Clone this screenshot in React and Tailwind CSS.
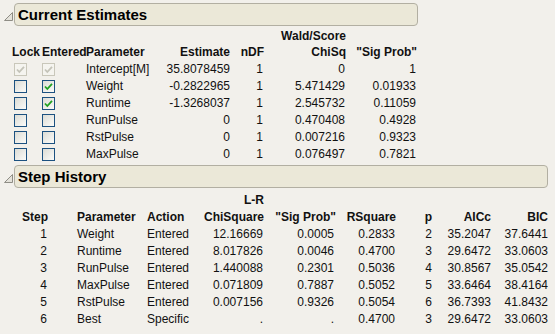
import React from 'react';

const estimates = [
    { name: 'Intercept[M]', est: '35.8078459', ndf: '1', chi: '0', prob: '1', lock: true, entered: true, disabled: true },
    { name: 'Weight', est: '-0.2822965', ndf: '1', chi: '5.471429', prob: '0.01933', lock: false, entered: true },
    { name: 'Runtime', est: '-1.3268037', ndf: '1', chi: '2.545732', prob: '0.11059', lock: false, entered: true },
    { name: 'RunPulse', est: '0', ndf: '1', chi: '0.470408', prob: '0.4928', lock: false, entered: false },
    { name: 'RstPulse', est: '0', ndf: '1', chi: '0.007216', prob: '0.9323', lock: false, entered: false },
    { name: 'MaxPulse', est: '0', ndf: '1', chi: '0.076497', prob: '0.7821', lock: false, entered: false },
];

const steps = [
    ['1', 'Weight', 'Entered', '12.16669', '0.0005', '0.2833', '2', '35.2047', '37.6441'],
    ['2', 'Runtime', 'Entered', '8.017826', '0.0046', '0.4700', '3', '29.6472', '33.0603'],
    ['3', 'RunPulse', 'Entered', '1.440088', '0.2301', '0.5036', '4', '30.8567', '35.0542'],
    ['4', 'MaxPulse', 'Entered', '0.071809', '0.7887', '0.5052', '5', '33.6464', '38.4164'],
    ['5', 'RstPulse', 'Entered', '0.007156', '0.9326', '0.5054', '6', '36.7393', '41.8432'],
    ['6', 'Best', 'Specific', '.', '.', '0.4700', '3', '29.6472', '33.0603'],
];

// little disclosure triangle left of each outline header
const Disclosure = () => (
    <svg width="11" height="11" viewBox="0 0 11 11" className="shrink-0">
        <polygon points="9.5,1.5 9.5,9.5 1.5,9.5" fill="#e4e2da" stroke="#8f8d85" strokeWidth="1" />
    </svg>
);

const OutlineHeader = ({ title, width }) => (
    <div className="flex items-center h-[23px]">
        <div className="w-[14px] flex justify-center pt-[3px] pl-[2px]">
            <Disclosure />
        </div>
        <div className={`${width} h-[23px] rounded-[4px] border border-[#b2afa2] bg-[#ebe8d8] flex items-center pl-[3px]`}>
            <span className="text-[15px] font-bold leading-none text-black">{title}</span>
        </div>
    </div>
);

const CheckBox = ({ checked, disabled }) => (
    <div
        className={`w-[13px] h-[13px] border flex items-center justify-center ${
            disabled ? 'border-[#c9c7ba] bg-[#f5f4ef]' : 'border-[#1c5180] bg-gradient-to-br from-[#dcdcd5] to-[#fbfbf9]'
        }`}
    >
        {checked && (
            <svg width="9" height="9" viewBox="0 0 9 9">
                <path d="M1 4.5 L3.3 7 L8 1.8" fill="none" stroke={disabled ? '#c4c3b8' : '#21a121'} strokeWidth="1.8" />
            </svg>
        )}
    </div>
);

const estCols = 'grid grid-cols-[30px_44px_74px_70px_34px_82px_72px]';
const stepCols = 'grid grid-cols-[36px_29px_70px_53px_64px_72px_60px_36px_59px_57px]';

export default function App() {
    return (
        <div className="w-[555px] h-[334px] overflow-hidden bg-[#f2f0eb] text-[12px] text-[#111] pt-[3px]" style={{ fontFamily: '"Liberation Sans", Arial, sans-serif' }}>
            <OutlineHeader title="Current Estimates" width="w-[404px]" />

            <div className="pl-[12px] mt-[2px]">
                <div className={`${estCols} h-[16px] leading-[16px] font-bold`}>
                    <div /><div /><div /><div /><div />
                    <div className="text-right whitespace-nowrap">Wald/Score</div>
                    <div />
                </div>
                <div className={`${estCols} h-[16px] leading-[16px] font-bold`}>
                    <div>Lock</div>
                    <div>Entered</div>
                    <div>Parameter</div>
                    <div className="text-right">Estimate</div>
                    <div className="text-right">nDF</div>
                    <div className="text-right">ChiSq</div>
                    <div className="text-right pr-[1px]">"Sig Prob"</div>
                </div>
                <div className="mt-[1px]">
                    {estimates.map((r) => (
                        <div key={r.name} className={`${estCols} h-[17px] leading-[17px] items-center`}>
                            <div className="pl-[2px]"><CheckBox checked={r.lock} disabled={r.disabled} /></div>
                            <div><CheckBox checked={r.entered} disabled={r.disabled} /></div>
                            <div>{r.name}</div>
                            <div className="text-right">{r.est}</div>
                            <div className="text-right pr-[1px]">{r.ndf}</div>
                            <div className="text-right pr-[1px]">{r.chi}</div>
                            <div className="text-right pr-[2px]">{r.prob}</div>
                        </div>
                    ))}
                </div>
            </div>

            <div className="mt-[2px]">
                <OutlineHeader title="Step History" width="w-[534px]" />
            </div>

            <div className="pl-[12px] mt-[4px]">
                <div className={`${stepCols} h-[17px] leading-[17px] font-bold`}>
                    <div /><div /><div /><div />
                    <div className="text-right">L-R</div>
                    <div /><div /><div /><div /><div />
                </div>
                <div className={`${stepCols} h-[17px] leading-[17px] font-bold`}>
                    <div className="text-right">Step</div>
                    <div />
                    <div>Parameter</div>
                    <div>Action</div>
                    <div className="text-right">ChiSquare</div>
                    <div className="text-right">"Sig Prob"</div>
                    <div className="text-right">RSquare</div>
                    <div className="text-right">p</div>
                    <div className="text-right">AICc</div>
                    <div className="text-right">BIC</div>
                </div>
                {steps.map((s) => (
                    <div key={s[0]} className={`${stepCols} h-[17px] leading-[17px]`}>
                        <div className="text-right pr-[1px]">{s[0]}</div>
                        <div />
                        <div>{s[1]}</div>
                        <div>{s[2]}</div>
                        <div className="text-right pr-[1px]">{s[3]}</div>
                        <div className="text-right pr-[2px]">{s[4]}</div>
                        <div className="text-right pr-[1px]">{s[5]}</div>
                        <div className="text-right">{s[6]}</div>
                        <div className="text-right">{s[7]}</div>
                        <div className="text-right">{s[8]}</div>
                    </div>
                ))}
            </div>
        </div>
    );
}
